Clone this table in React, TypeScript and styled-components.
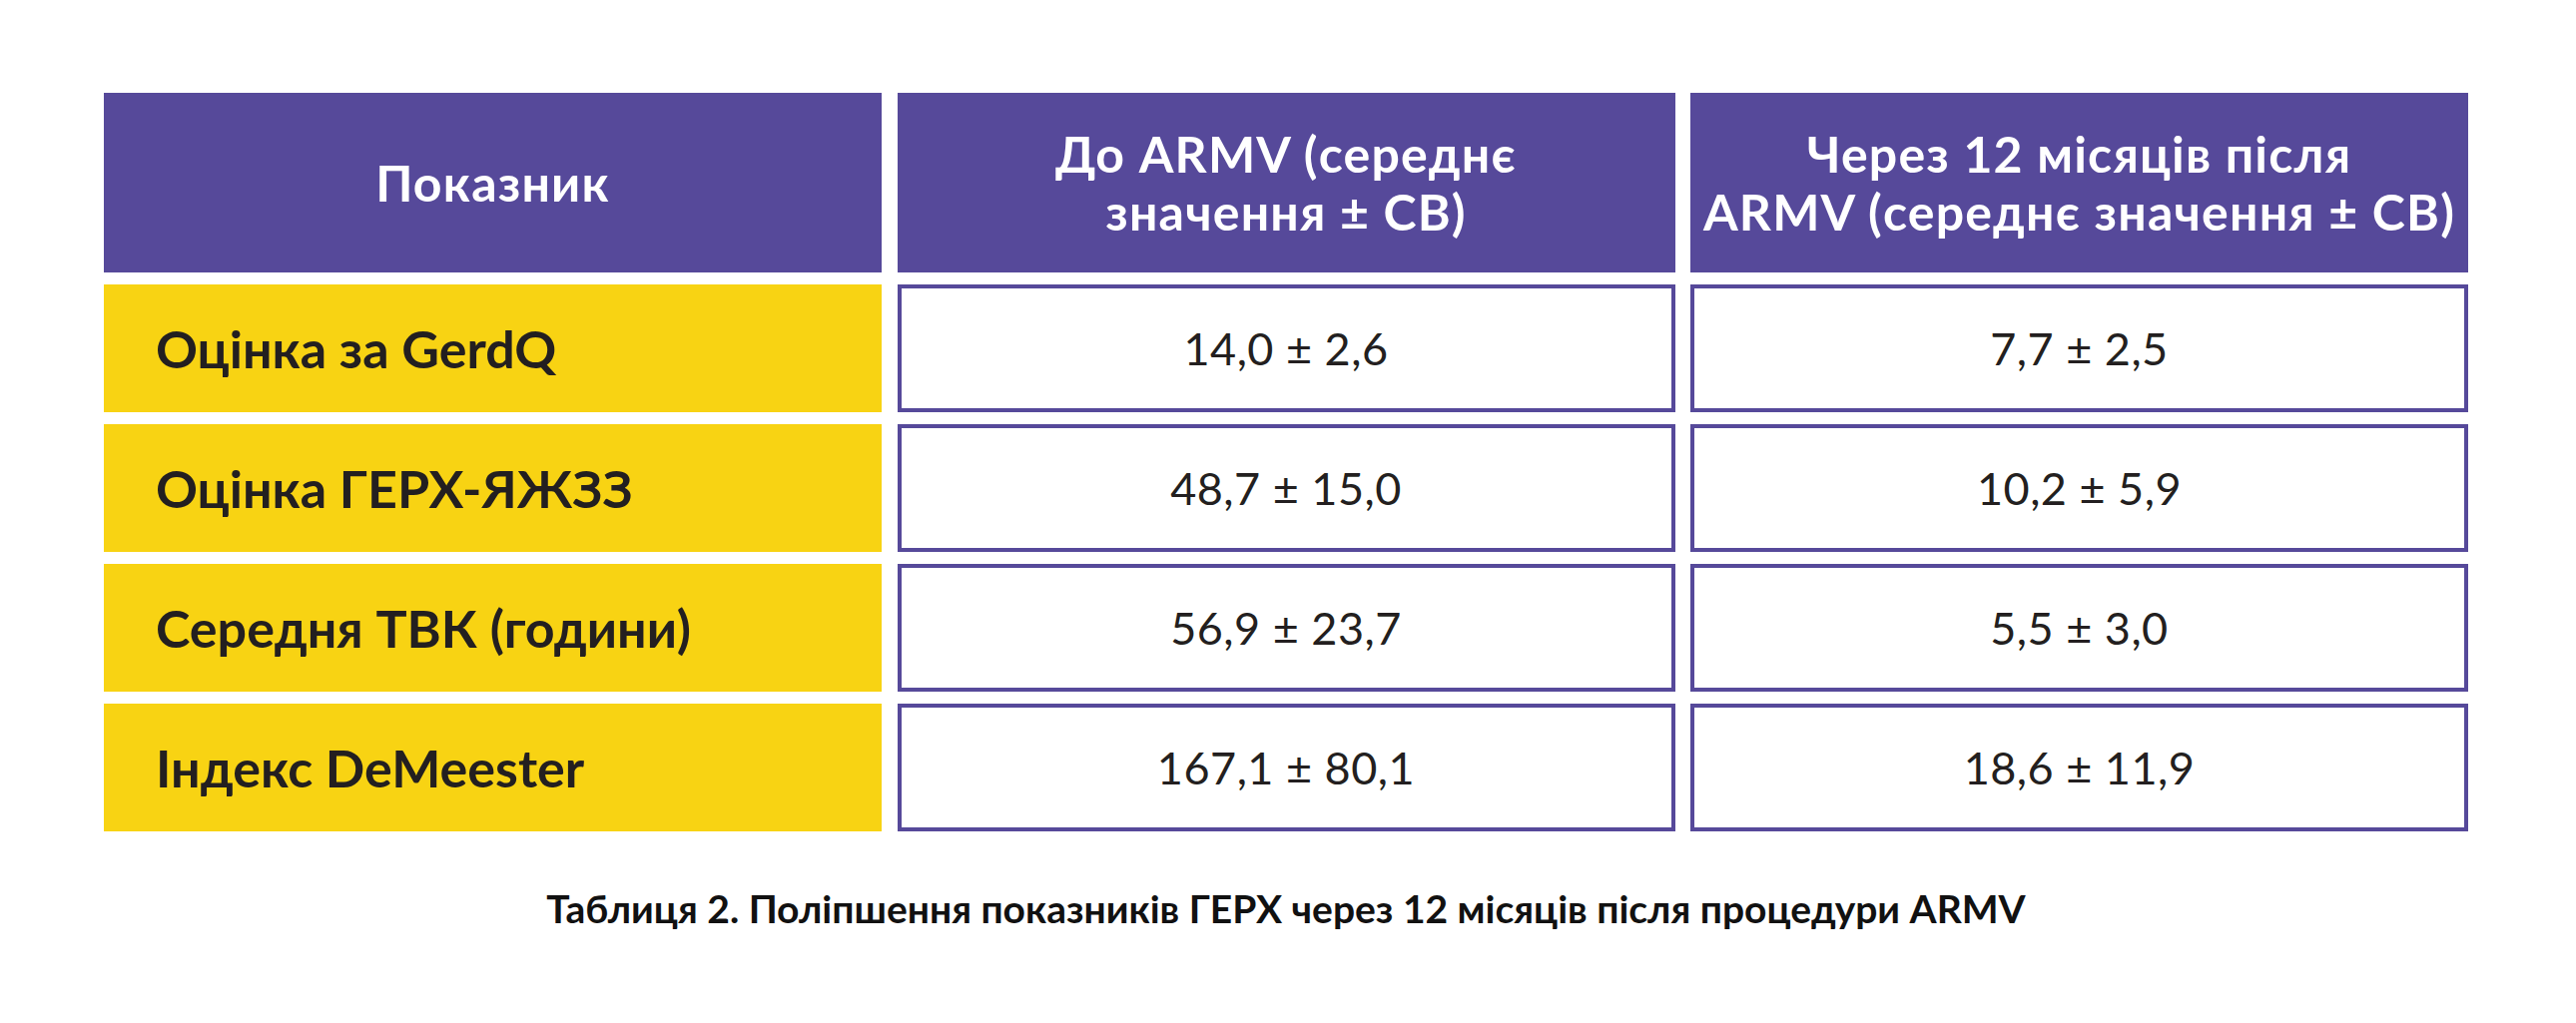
import React from 'react';
import styled, { createGlobalStyle } from 'styled-components';

const GlobalStyle = createGlobalStyle`
    html, body {
        margin: 0;
        padding: 0;
        background: #ffffff;
    }
    body {
        font-family: Lato, 'Noto Sans', 'Liberation Sans', sans-serif;
        color: #231f20;
    }
`;

const purple = '#56499a';
const yellow = '#f8d313';

const Page = styled.div`
    width: 2580px;
    padding: 93px 0 0 104px;
    box-sizing: border-box;
`;

const Figure = styled.div`
    width: 2368px;
    display: flex;
    flex-direction: column;
    align-items: center;
`;

const Grid = styled.div`
    width: 100%;
    display: grid;
    grid-template-columns: repeat(3, 1fr);
    grid-template-rows: 180px repeat(4, 128px);
    column-gap: 15.5px;
    row-gap: 12px;
`;

const HeadCell = styled.div`
    background: ${purple};
    color: #ffffff;
    display: flex;
    flex-direction: column;
    align-items: center;
    justify-content: center;
    font-weight: 700;
    font-size: 50px;
    letter-spacing: 1.2px;
    line-height: 58px;
    text-align: center;
`;

const HeadLine = styled.span`
    white-space: nowrap;
`;

const LabelCell = styled.div`
    background: ${yellow};
    display: flex;
    align-items: center;
    padding-left: 52px;
    font-weight: 700;
    font-size: 52px;
    color: #231f20;
`;

const ValueCell = styled.div`
    background: #ffffff;
    border: 4px solid ${purple};
    box-sizing: border-box;
    display: flex;
    align-items: center;
    justify-content: center;
    font-weight: 400;
    font-size: 45px;
    letter-spacing: 0.5px;
    color: #231f20;
`;

const Caption = styled.div`
    margin-top: 54px;
    font-weight: 700;
    font-size: 39px;
    line-height: 46px;
    color: #111111;
`;

type Row = { label: string; before: string; after: string };

const rows: Row[] = [
    { label: 'Оцінка за GerdQ', before: '14,0 ± 2,6', after: '7,7 ± 2,5' },
    { label: 'Оцінка ГЕРХ-ЯЖЗЗ', before: '48,7 ± 15,0', after: '10,2 ± 5,9' },
    { label: 'Середня ТВК (години)', before: '56,9 ± 23,7', after: '5,5 ± 3,0' },
    { label: 'Індекс DeMeester', before: '167,1 ± 80,1', after: '18,6 ± 11,9' }
];

const headers: string[][] = [
    ['Показник'],
    ['До ARMV (середнє', 'значення ± СВ)'],
    ['Через 12 місяців після', 'ARMV (середнє значення ± СВ)']
];

const App = () => {
    return (
        <>
            <GlobalStyle />
            <Page>
                <Figure>
                    <Grid>
                        {headers.map((lines, i) => (
                            <HeadCell key={i}>
                                {lines.map((line) => (
                                    <HeadLine key={line}>{line}</HeadLine>
                                ))}
                            </HeadCell>
                        ))}
                        {rows.map((row) => (
                            <React.Fragment key={row.label}>
                                <LabelCell>{row.label}</LabelCell>
                                <ValueCell>{row.before}</ValueCell>
                                <ValueCell>{row.after}</ValueCell>
                            </React.Fragment>
                        ))}
                    </Grid>
                    <Caption>
                        Таблиця 2. Поліпшення показників ГЕРХ через 12 місяців після процедури ARMV
                    </Caption>
                </Figure>
            </Page>
        </>
    );
};

export default App;
